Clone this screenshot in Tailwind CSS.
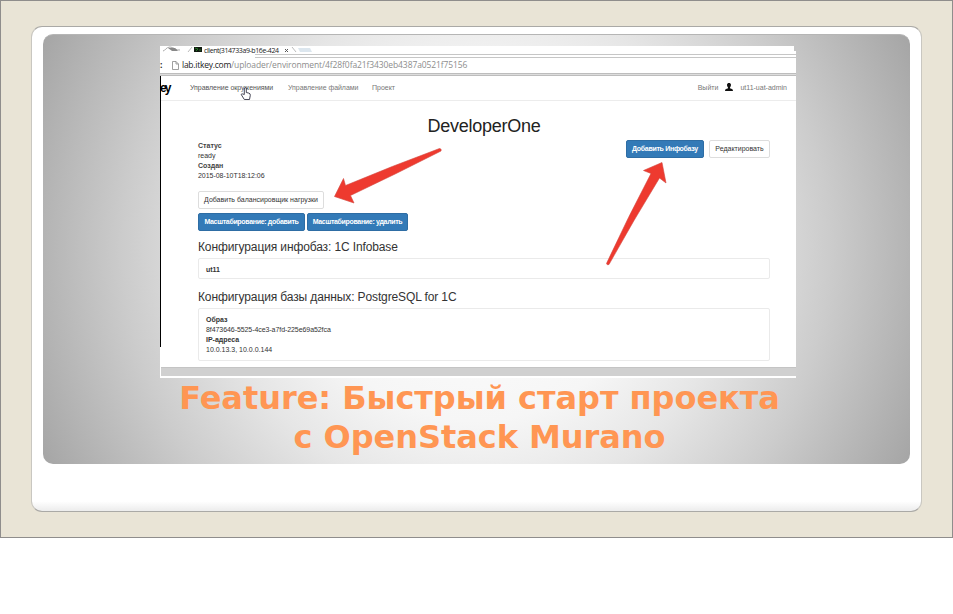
<!DOCTYPE html>
<html lang="ru">
<head>
<meta charset="utf-8">
<title>Feature: Быстрый старт проекта с OpenStack Murano</title>
<script src="https://cdn.jsdelivr.net/npm/@tailwindcss/browser@4"></script>
</head>
<body class="bg-white w-[953px] h-[614px] overflow-hidden">
<main class="w-[953px] h-[538px] border border-[#8f8d8c] bg-[#e9e4d6] pt-[25px] pl-[30px]">
  <div class="w-[891px] h-[486px] rounded-[11px] border border-[#aaa9a6] border-x-[#c9c7c1] bg-linear-to-b from-white from-98% to-[#ececec] pt-[7px] pl-[11px]">
    <section class="w-[867px] h-[430px] rounded-[10px] border-t border-[#b5b5b5] bg-[radial-gradient(circle_490px_at_50%_50%,#ffffff_0%,#f6f6f6_35%,#e6e6e6_52%,#cccccc_72%,#a3a3a3_100%)] pt-[11px] pl-[117px]">
      <div class="relative w-[636px] h-[332px] bg-white text-[#333] font-['Liberation_Sans',sans-serif] text-[7px] leading-[10.1px] whitespace-nowrap flex flex-col">
        <!-- Browser tab strip -->
        <div class="h-[8px] overflow-hidden flex shrink-0">
          <svg class="w-[160px] h-[8px]" viewBox="0 0 160 8">
            <path d="M3 5 C5 5 6 1 10 1 S16 5 20 4" fill="none" stroke="#aaa"/><path d="M8 2h7l3 3h-6z" fill="#888"/>
            <path d="M28 6 L32 1 M132 1 L136 6" stroke="#bbb" fill="none"/>
            <path d="M34 1h8v5h-8z" fill="#101a10"/><path d="M35 2l3 1-2 2M39 4h2" stroke="#2a8b2a" stroke-width=".8" fill="none"/>
            <path d="M138 2h12l2 4h-12z" fill="#dce6ee"/>
            <path d="M125 3l3 3m0-3l-3 3" stroke="#555"/>
            <text x="44" y="7.2" font-size="7" textLength="75" fill="#222" font-family="Open Sans, sans-serif">client(314733a9-b16e-424</text>
          </svg>
        </div>
        <div class="h-[4px] border-b border-[#c6c6c6] ml-[95px] shrink-0 border-t border-t-[#c6c6c6]"></div>
        <!-- Address bar -->
        <div class="h-[15px] flex items-center shrink-0 font-['Open_Sans',sans-serif] text-[8.5px] text-[#8d8d8d]">
          <span class="w-[12px] text-[#222] font-bold leading-none">:</span>
          <svg class="w-[7px] h-[9px] mr-[3px]" viewBox="0 0 7 9"><path d="M.5.5H4L6.5 3v5.5H.5zM4 .5V3h2.5" fill="#fff" stroke="#888" stroke-width=".8"/></svg>
          <span class="tracking-[-0.1px]"><span class="text-[#222] tracking-[-0.25px]">lab.itkey.com</span>/uploader/environment/4f28f0fa21f3430eb4387a0521f75156</span>
        </div>
        <div class="h-[3px] border-y border-y-[#bdbdbd] bg-[#ddd] shrink-0"></div>
        <!-- Navigation -->
        <nav class="h-[25px] shrink-0 border-b border-[#ececec] flex items-center text-[#777]">
          <b class="w-[30px] text-[12px] leading-[14px] tracking-[-1.8px] text-black">ey</b>
          <span class="w-[98px] text-[#555] tracking-[-0.04px]">Управление окружениями</span>
          <span class="w-[84px] tracking-[-0.04px]">Управление файлами</span>
          <span>Проект</span>
          <span class="ml-auto">Выйти</span>
          <svg class="w-[8px] h-[8px] mx-[7px] mb-[2px]" viewBox="0 0 8 8"><path d="M4 0C6.400 0 6.500 2.800 5 4.500v.7C6.500 5.800 8 6 8 8H0C0 6 1.500 5.800 3 5.200v-.7C1.500 2.800 1.600 0 4 0z" fill="#111"/></svg>
          <span class="mr-[9px]">ut11-uat-admin</span>
        </nav>
        <!-- Environment page -->
        <div class="pl-[38px] pr-[26px] flex flex-col">
          <h1 class="mt-[15px] h-[20px] text-center text-[18px] leading-[20px] text-[#222] tracking-[-0.25px]">DeveloperOne</h1>
          <div class="mt-[5px] flex justify-between items-start">
            <div><b class="text-[#444]">Статус</b><br>ready<br><b class="text-[#444]">Создан</b><br><span class="tracking-[-0.04px]">2015-08-10T18:12:06</span></div>
            <div class="flex gap-[5px] -mt-[1px]">
              <button class="w-[78px] h-[18px] rounded-[2px] border border-[#2e6da4] bg-[#337ab7] text-white font-bold tracking-[-0.3px]">Добавить Инфобазу</button>
              <button class="w-[61px] h-[18px] rounded-[2px] border border-[#ddd]">Редактировать</button>
            </div>
          </div>
          <button class="mt-[10px] w-[126px] h-[18px] rounded-[2px] border border-[#ddd]">Добавить балансировщик нагрузки</button>
          <div class="mt-[4px] flex gap-[2px]">
            <button class="w-[107px] h-[18px] rounded-[2px] border border-[#2e6da4] bg-[#337ab7] text-white font-bold tracking-[-0.32px]">Масштабирование: добавить</button>
            <button class="w-[101px] h-[18px] rounded-[2px] border border-[#2e6da4] bg-[#337ab7] text-white font-bold tracking-[-0.32px]">Масштабирование: удалить</button>
          </div>
          <h3 class="mt-[9px] h-[14px] text-[12px] leading-[14px] tracking-[-0.12px]">Конфигурация инфобаз: 1C Infobase</h3>
          <div class="mt-[4px] h-[21px] border border-[#eaeaea] rounded-[2px] px-[7px] pt-[5.500px]"><b>ut11</b></div>
          <h3 class="mt-[11px] h-[14px] text-[12px] leading-[14px] tracking-[-0.12px]">Конфигурация базы данных: PostgreSQL for 1C</h3>
          <div class="mt-[4px] h-[53px] border border-[#eaeaea] rounded-[2px] px-[7px] pt-[5.500px]"><b>Образ</b><br><span class="tracking-[-0.07px]">8f473646-5525-4ce3-a7fd-225e69a52fca</span><br><b>IP-адреса</b><br>10.0.13.3, 10.0.0.144</div>
        </div>
        <div class="mt-auto ml-[1px] h-[9px] mb-[2px] bg-[#d0d0d0] border-t border-[#c4c4c4] shrink-0"></div>
        <div class="absolute left-0 top-[30px] w-[1px] h-[271px] bg-black"></div>
        <div class="absolute right-0 top-0 w-[2px] h-[5px] bg-[#c4c4c4]"></div>
        <!-- Pointer and callout arrows -->
        <svg class="absolute left-0 top-0 w-[636px] h-[331px]" viewBox="160 46 636 331">
          <path d="M244.300 94.500v-5.500q0-1.500 1-1.500t1 1.500v3.500l2.500.6q1.700.4 1.500 2.200l-.8 4.200h-5.200l-3-4.800q0-1.200 1.200-.8z" fill="#fff" stroke="#334" stroke-width=".9"/>
          <path d="M334.500 196.500L343.500 178.500L345.500 185.500Q392 166 439.500 148.500Q442 149 441 151Q396 174 350.500 195.500L354 203Z" fill="#ee3a2f" stroke="#d2463e" stroke-width=".6"/>
          <path d="M662 162.500L643.500 170.500L651 173.500Q628 217 606.500 263.500Q607 265.500 609 264.500Q633 221 659.500 178L666 183Z" fill="#ee3a2f" stroke="#d2463e" stroke-width=".6"/>
        </svg>
      </div>
      <h2 class="mt-[1px] w-[639px] text-center font-['DejaVu_Sans',sans-serif] font-bold text-[32px] leading-[39px] tracking-[-0.04px] text-[#ff9653] whitespace-nowrap">Feature: Быстрый старт проекта<br>с OpenStack Murano</h2>
    </section>
  </div>
</main>
</body>
</html>
